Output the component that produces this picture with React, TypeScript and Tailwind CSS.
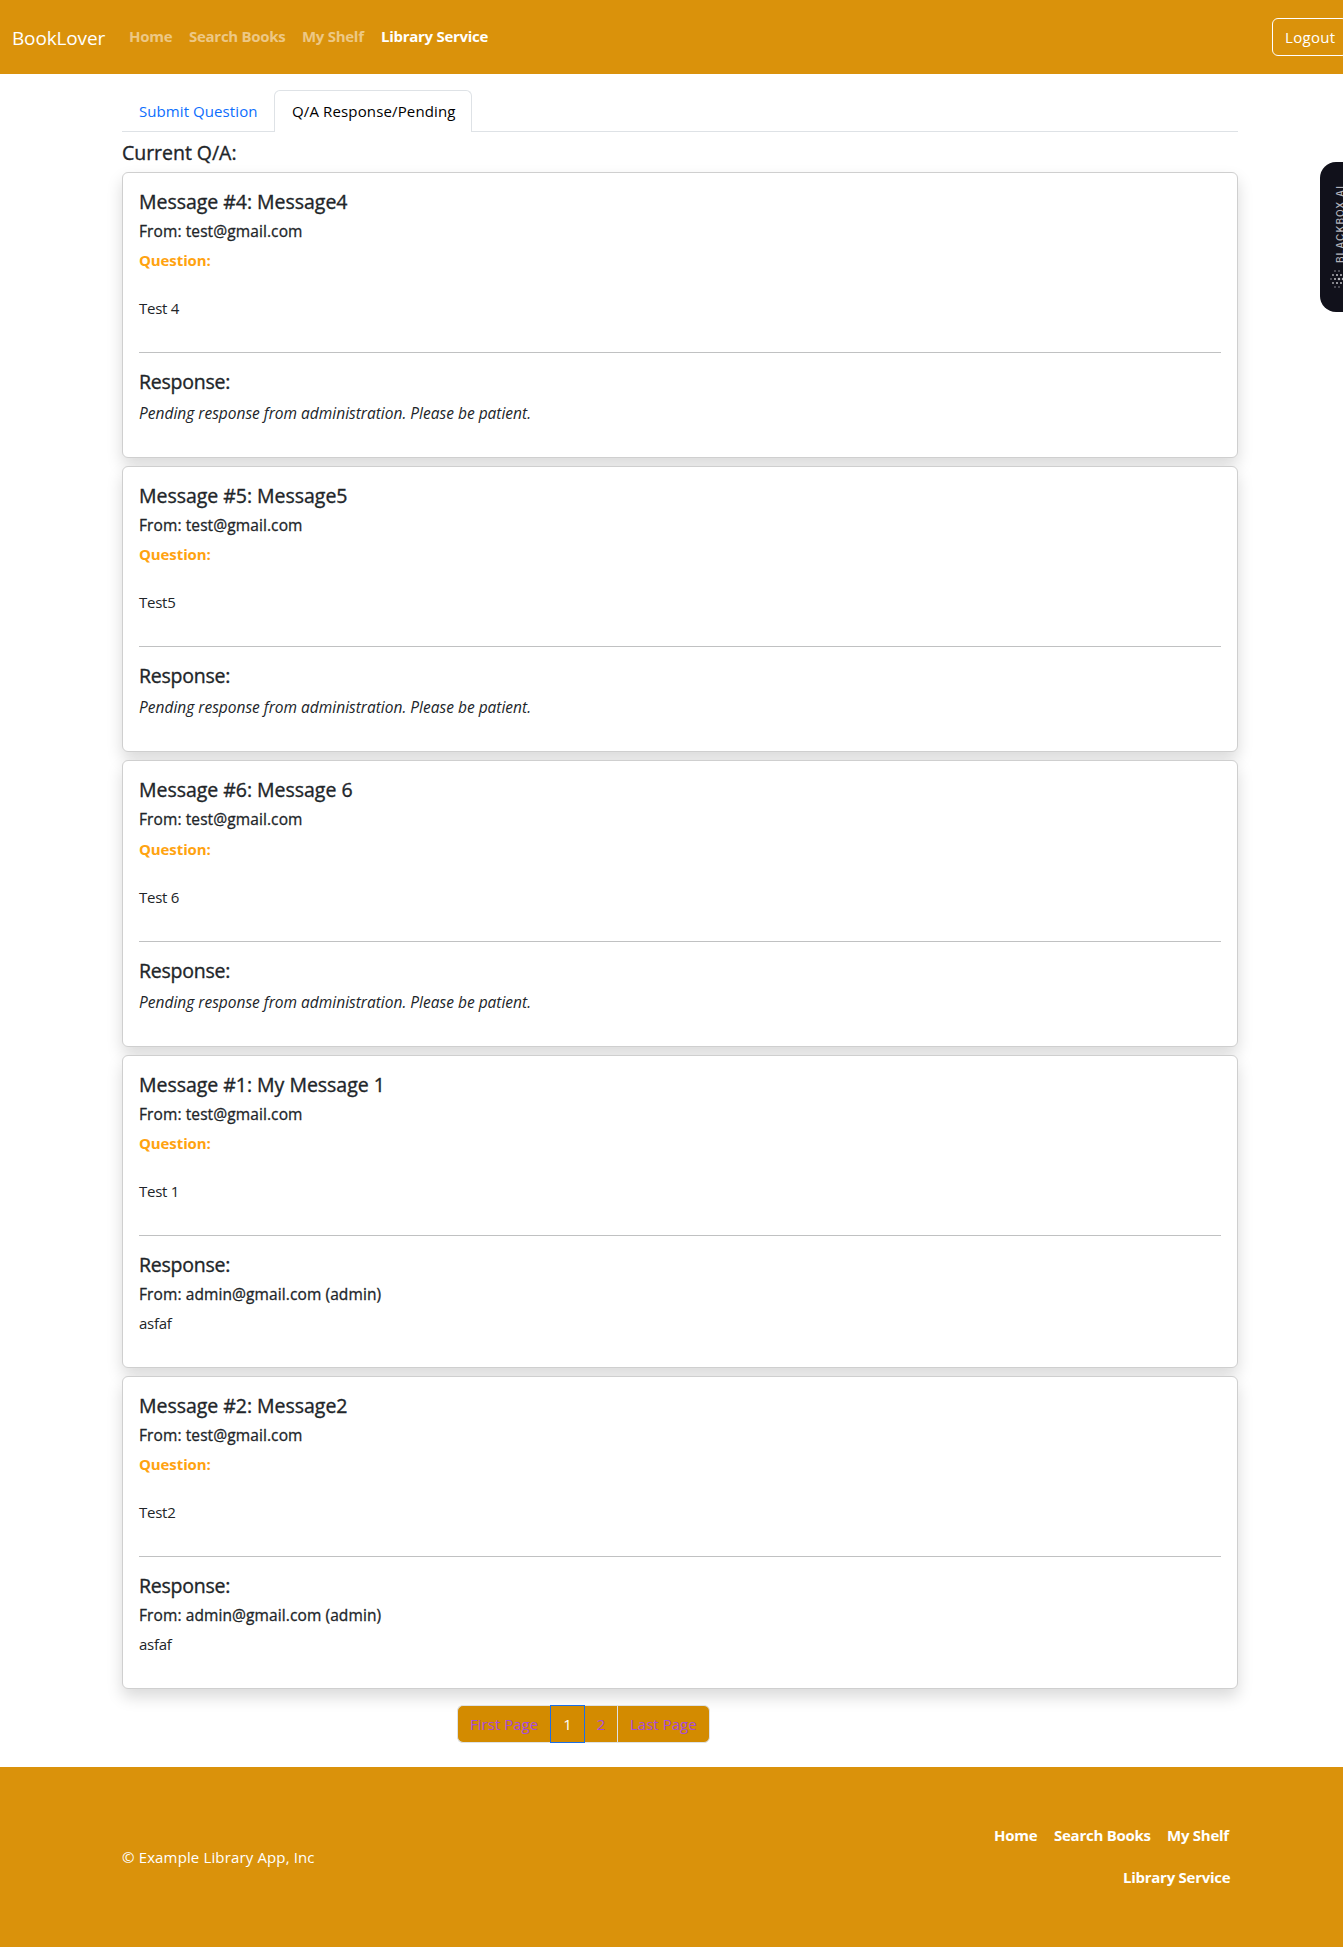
type Message = {
  id: number;
  title: string;
  question: string;
  response?: string;
};

const messages: Message[] = [
  { id: 4, title: "Message4", question: "Test 4" },
  { id: 5, title: "Message5", question: "Test5" },
  { id: 6, title: "Message 6", question: "Test 6" },
  { id: 1, title: "My Message 1", question: "Test 1", response: "asfaf" },
  { id: 2, title: "Message2", question: "Test2", response: "asfaf" },
];

function Navbar() {
  return (
    <nav className="flex h-[74px] w-full items-center bg-[#da920b] pl-3">
      <a className="w-[93px] shrink-0 pt-0.5 text-[19px] leading-[30px] tracking-[-0.15px] text-white">BookLover</a>
      <div className="ml-6 flex gap-4 pb-0.5 text-[15px] leading-6 font-bold tracking-[-0.28px] text-[#edc885]">
        <a className="w-11">Home</a>
        <a className="w-[97px]">Search Books</a>
        <a className="w-[63px]">My Shelf</a>
        <a className="text-white">Library Service</a>
      </div>
      <button className="ml-auto -mr-[5px] h-[38px] w-[76px] shrink-0 rounded-md border border-white pl-3 text-left text-[15px] leading-6 tracking-[0.3px] text-white">
        Logout
      </button>
    </nav>
  );
}

function Tabs() {
  return (
    <div className="flex h-[42px] text-[15px] leading-6 tracking-[0.14px]">
      <a className="w-[152px] border-b border-[#dee2e6] pt-[9px] pl-[17px] tracking-[0.08px] text-[#0d6efd]">Submit Question</a>
      <a className="w-[198px] rounded-t-md border border-b-0 border-[#dee2e6] pt-2 pl-[17px] text-black">
        Q/A Response/Pending
      </a>
      <div className="flex-1 border-b border-[#dee2e6]" />
    </div>
  );
}

function MessageCard({ message }: { message: Message }) {
  return (
    <article
      className={`${message.response ? "h-[313px]" : "h-[286.3px]"} mb-2 rounded-md border border-[#cfcfcf] bg-white p-4 text-[15px] leading-6 tracking-[-0.25px] shadow-[0_8px_16px_rgba(0,0,0,0.15)]`}
    >
      <h5 className="mb-2 pt-px text-[19.5px] leading-[23px] tracking-[-0.03px] [-webkit-text-stroke:0.35px]">
        Message #{message.id}: {message.title}
      </h5>
      <h6 className="mb-2 pt-px text-[15.5px] leading-[18.2px] tracking-[0.1px] [-webkit-text-stroke:0.3px]">
        From: test@gmail.com
      </h6>
      <p className="font-bold tracking-[-0.1px] text-[#ffa310]">Question:</p>
      <p className="mt-6 mb-8">{message.question}</p>
      <hr className="mb-4 h-px border-0 bg-[#c0c1c2]" />
      <h5 className="mb-2 pt-px text-[19.5px] leading-[23px] tracking-[-0.25px] [-webkit-text-stroke:0.35px]">
        Response:
      </h5>
      {message.response ? (
        <>
          <h6 className="mb-2 pt-px text-[15.5px] leading-[18px] tracking-[0.1px] [-webkit-text-stroke:0.3px]">
            From: admin@gmail.com (admin)
          </h6>
          <p>{message.response}</p>
        </>
      ) : (
        <p className="text-[15.5px] tracking-[0px] italic">
          Pending response from administration. Please be patient.
        </p>
      )}
    </article>
  );
}

function Pagination() {
  return (
    <div className="mt-4 ml-[335px] flex h-[38px] w-[253px] text-[15px] leading-6 tracking-[0.02px] text-[#a84bdc]">
      <a className="w-[93px] rounded-l-md border border-r-0 border-[#dee2e6] bg-[#d38b00] py-1.5 pl-3">First Page</a>
      <a className="w-[35px] border border-[#1a6fe8] bg-[#d38b00] py-1.5 text-center text-white">1</a>
      <a className="w-8 border-y border-[#dee2e6] bg-[#d38b00] py-1.5 text-center">2</a>
      <a className="w-[93px] rounded-r-md border border-[#dee2e6] bg-[#d38b00] py-1.5 pl-3">Last Page</a>
    </div>
  );
}

function Footer() {
  return (
    <footer className="flex h-[180px] items-center justify-between bg-[#da920b] pr-[113px] pl-[122px] text-[15px] leading-6 text-white">
      <p className="tracking-[0.14px]">© Example Library App, Inc</p>
      <div className="flex w-[237px] flex-wrap justify-end gap-x-4 gap-y-[18px] pb-0.5 font-bold tracking-[-0.26px]">
        <a className="w-11">Home</a>
        <a className="w-[97px]">Search Books</a>
        <a className="w-[63px]">My Shelf</a>
        <a className="w-[107px]">Library Service</a>
      </div>
    </footer>
  );
}

const dots = [
  [5, 0, 0.7], [9, 0, 0.7],
  [3, 4, 0.9], [7, 4, 1.1], [11, 4, 1.1],
  [1, 8, 0.7], [5, 8, 1.1], [9, 8, 1.3], [13, 8, 1.3],
  [3, 12, 0.9], [7, 12, 1.1], [11, 12, 1.1],
  [5, 16, 0.7], [9, 16, 0.7],
];

function AssistantTab() {
  return (
    <aside className="absolute top-[162px] right-0 h-[150px] w-[23px] overflow-hidden rounded-l-2xl bg-[#11111b]">
      <span className="absolute top-[23px] left-[14px] h-[78px] rotate-180 font-[Inter] text-[10px] leading-3 font-medium tracking-[1.05px] whitespace-nowrap text-[#b3b3ba] [writing-mode:vertical-rl]">
        BLACKBOX AI
      </span>
      <svg className="absolute top-[107px] left-[9px]" width="14" height="20" viewBox="0 -1 14 20" fill="#b5b5ba">
        {dots.map(([x, y, r]) => (
          <circle key={`${x}-${y}`} cx={x + 1} cy={y + 1} r={r} />
        ))}
      </svg>
    </aside>
  );
}

export default function App() {
  return (
    <div className="relative h-[1947px] w-full overflow-hidden bg-white font-['Open_Sans',sans-serif] whitespace-nowrap text-[#212529]">
      <Navbar />
      <main className="mr-[105px] ml-[122px] h-[1693px] pt-4">
        <Tabs />
        <h5 className="mt-2 mb-[7.8px] pt-px text-[19.5px] leading-[23px] tracking-[-0.03px] [-webkit-text-stroke:0.35px]">
          Current Q/A:
        </h5>
        {messages.map((message) => (
          <MessageCard key={message.id} message={message} />
        ))}
        <Pagination />
      </main>
      <Footer />
      <AssistantTab />
    </div>
  );
}
